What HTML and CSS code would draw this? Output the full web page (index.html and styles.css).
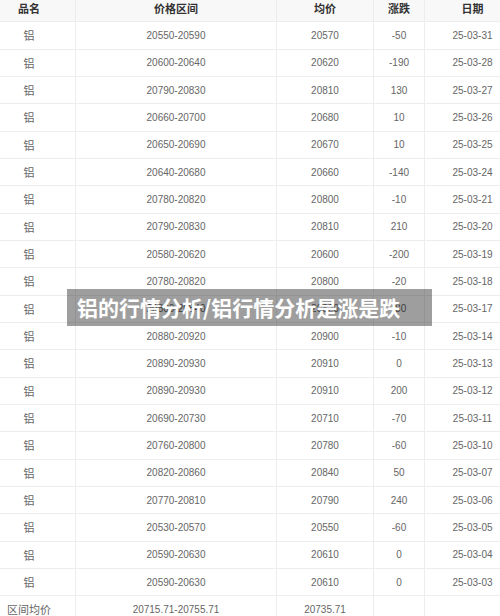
FILE: index.html
```html
<!DOCTYPE html>
<html lang="zh">
<head>
<meta charset="utf-8">
<title>铝的行情分析</title>
<link rel="stylesheet" href="styles.css">
</head>
<body>
<div class="page">
  <table class="quotes">
    <colgroup>
      <col class="c1"><col class="c2"><col class="c3"><col class="c4"><col class="c5">
    </colgroup>
    <thead>
      <tr><th>品名</th><th>价格区间</th><th>均价</th><th>涨跌</th><th>日期</th></tr>
    </thead>
    <tbody>
      <tr><td class="name">铝</td><td>20550-20590</td><td>20570</td><td>-50</td><td>25-03-31</td></tr>
      <tr><td class="name">铝</td><td>20600-20640</td><td>20620</td><td>-190</td><td>25-03-28</td></tr>
      <tr><td class="name">铝</td><td>20790-20830</td><td>20810</td><td>130</td><td>25-03-27</td></tr>
      <tr><td class="name">铝</td><td>20660-20700</td><td>20680</td><td>10</td><td>25-03-26</td></tr>
      <tr><td class="name">铝</td><td>20650-20690</td><td>20670</td><td>10</td><td>25-03-25</td></tr>
      <tr><td class="name">铝</td><td>20640-20680</td><td>20660</td><td>-140</td><td>25-03-24</td></tr>
      <tr><td class="name">铝</td><td>20780-20820</td><td>20800</td><td>-10</td><td>25-03-21</td></tr>
      <tr><td class="name">铝</td><td>20790-20830</td><td>20810</td><td>210</td><td>25-03-20</td></tr>
      <tr><td class="name">铝</td><td>20580-20620</td><td>20600</td><td>-200</td><td>25-03-19</td></tr>
      <tr><td class="name">铝</td><td>20780-20820</td><td>20800</td><td>-20</td><td>25-03-18</td></tr>
      <tr><td class="name">铝</td><td>20800-20840</td><td>20820</td><td>-80</td><td>25-03-17</td></tr>
      <tr><td class="name">铝</td><td>20880-20920</td><td>20900</td><td>-10</td><td>25-03-14</td></tr>
      <tr><td class="name">铝</td><td>20890-20930</td><td>20910</td><td>0</td><td>25-03-13</td></tr>
      <tr><td class="name">铝</td><td>20890-20930</td><td>20910</td><td>200</td><td>25-03-12</td></tr>
      <tr><td class="name">铝</td><td>20690-20730</td><td>20710</td><td>-70</td><td>25-03-11</td></tr>
      <tr><td class="name">铝</td><td>20760-20800</td><td>20780</td><td>-60</td><td>25-03-10</td></tr>
      <tr><td class="name">铝</td><td>20820-20860</td><td>20840</td><td>50</td><td>25-03-07</td></tr>
      <tr><td class="name">铝</td><td>20770-20810</td><td>20790</td><td>240</td><td>25-03-06</td></tr>
      <tr><td class="name">铝</td><td>20530-20570</td><td>20550</td><td>-60</td><td>25-03-05</td></tr>
      <tr><td class="name">铝</td><td>20590-20630</td><td>20610</td><td>0</td><td>25-03-04</td></tr>
      <tr><td class="name">铝</td><td>20590-20630</td><td>20610</td><td>0</td><td>25-03-03</td></tr>
      <tr><td class="name">区间均价</td><td>20715.71-20755.71</td><td>20735.71</td><td></td><td></td></tr>
    </tbody>
  </table>
  <div class="banner">铝的行情分析/铝行情分析是涨是跌</div>
</div>
</body>
</html>
```

FILE: styles.css
```css
html, body {
  margin: 0;
  padding: 0;
  background: #ffffff;
}

.page {
  position: relative;
  width: 500px;
  height: 616px;
  overflow: hidden;
  font-family: "Liberation Sans", "Noto Sans CJK SC", sans-serif;
}

.quotes {
  border-collapse: collapse;
  table-layout: fixed;
  width: 538px;
  margin: -6px 0 0 -18px;
}

.c1 { width: 93px; }
.c2 { width: 201px; }
.c3 { width: 97px; }
.c4 { width: 51px; }
.c5 { width: 96px; }

.quotes tr {
  height: 27.333px;
}

.quotes th,
.quotes td {
  border: 1px solid #ededed;
  padding: 0;
  text-align: center;
  vertical-align: middle;
  white-space: nowrap;
}

.quotes th {
  background: #f8f8f8;
  color: #333333;
  font-family: "Noto Sans CJK SC", sans-serif;
  font-size: 11px;
  font-weight: bold;
}

.quotes td {
  color: #666666;
  font-size: 10px;
}

.quotes td.name {
  font-family: "Noto Sans CJK SC", sans-serif;
  font-size: 11px;
}

.banner {
  position: absolute;
  left: 67px;
  top: 289px;
  width: 355px;
  height: 37px;
  padding-left: 10px;
  background: rgba(0, 0, 0, 0.38);
  color: #ffffff;
  font-family: "Noto Sans CJK SC", sans-serif;
  font-size: 21px;
  font-weight: bold;
  line-height: 37px;
  white-space: nowrap;
}
```
